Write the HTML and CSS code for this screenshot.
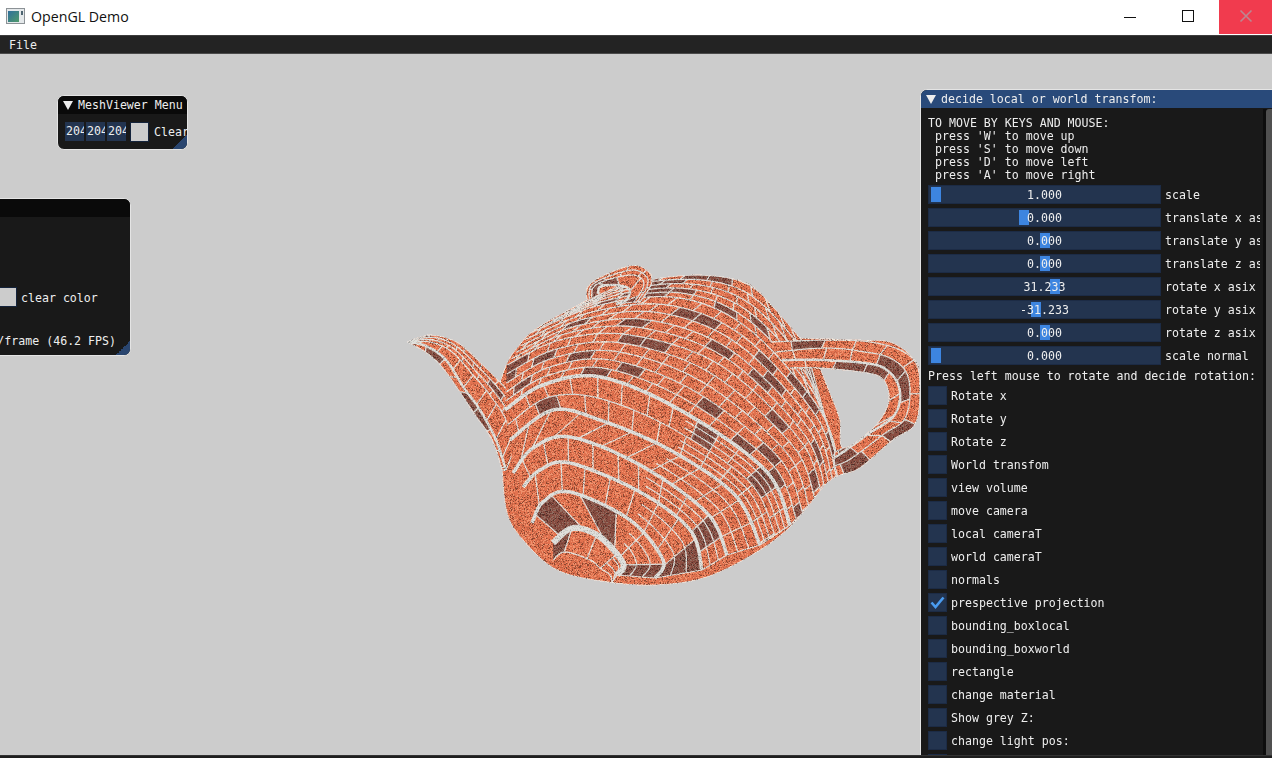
FILE: index.html
```html
<!DOCTYPE html>
<html lang="en">
<head>
    <meta charset="UTF-8">
    <title>OpenGL Demo</title>
    <link rel="stylesheet" href="styles.css">
</head>
<body>

    <!-- Title Bar -->
    <header class="titlebar">
        <svg class="app-icon" width="19" height="16" viewBox="0 0 19 16">
            <defs>
                <linearGradient id="icon-fill" x1="0" y1="0" x2="1" y2="1">
                    <stop offset="0" stop-color="#2f6f9c"/>
                    <stop offset="1" stop-color="#4f9a6a"/>
                </linearGradient>
            </defs>
            <rect x="0.5" y="0.5" width="18" height="15" fill="#e4e8ea" stroke="#8c9296"/>
            <rect x="2" y="3" width="11" height="11" fill="url(#icon-fill)"/>
            <rect x="15" y="3" width="2" height="4" fill="#4c6470"/>
        </svg>
        <span class="app-name">OpenGL Demo</span>
        <div class="win-buttons">
            <span class="win-btn"><i class="win-min"></i></span>
            <span class="win-btn"><i class="win-max"></i></span>
            <span class="win-btn win-close">
                <svg width="14" height="14" viewBox="0 0 14 14"><path d="M1.5 1.5L12.5 12.5M12.5 1.5L1.5 12.5" stroke="#bb8791" stroke-width="1.6"/></svg>
            </span>
        </div>
    </header>

    <!-- Menu Bar -->
    <nav class="menubar"><span>File</span></nav>

    <main class="desktop">
        <canvas id="teapot" width="530" height="330"></canvas>

        <!-- MeshViewer Menu -->
        <section class="window mesh-window">
            <div class="window-title"><i class="arrow"></i>MeshViewer Menu</div>
            <div class="mesh-row">
                <span class="num-input">204</span>
                <span class="num-input">204</span>
                <span class="num-input">204</span>
                <span class="swatch"></span>
                <span class="clear-label">Clear</span>
            </div>
            <i class="grip"></i>
        </section>

        <!-- Stats window, runs off the left edge -->
        <section class="window stats-window">
            <div class="window-title"></div>
            <div class="stats-color">
                <span class="swatch"></span>
                <span>clear color</span>
            </div>
            <div class="stats-fps">/frame (46.2 FPS)</div>
            <i class="grip"></i>
        </section>

        <!-- Transform window -->
        <section class="window transform-window">
            <div class="window-title title-active"><i class="arrow"></i>decide local or world transfom:</div>
            <div class="scrollbar"><i></i></div>
            <div class="transform-body">
                <pre class="help">TO MOVE BY KEYS AND MOUSE:
 press 'W' to move up
 press 'S' to move down
 press 'D' to move left
 press 'A' to move right</pre>

                <div class="slider-row"><div class="slider"><i style="left:2px"></i><span>1.000</span></div><label>scale</label></div>
                <div class="slider-row"><div class="slider"><i style="left:90px"></i><span>0.000</span></div><label>translate x asix</label></div>
                <div class="slider-row"><div class="slider"><i style="left:111px"></i><span>0.000</span></div><label>translate y asix</label></div>
                <div class="slider-row"><div class="slider"><i style="left:111px"></i><span>0.000</span></div><label>translate z asix</label></div>
                <div class="slider-row"><div class="slider"><i style="left:121px"></i><span>31.233</span></div><label>rotate x asix</label></div>
                <div class="slider-row"><div class="slider"><i style="left:102px"></i><span>-31.233</span></div><label>rotate y asix</label></div>
                <div class="slider-row"><div class="slider"><i style="left:111px"></i><span>0.000</span></div><label>rotate z asix</label></div>
                <div class="slider-row"><div class="slider"><i style="left:2px"></i><span>0.000</span></div><label>scale normal</label></div>

                <p class="note">Press left mouse to rotate and decide rotation:</p>

                <div class="check-row"><span class="check"></span>Rotate x</div>
                <div class="check-row"><span class="check"></span>Rotate y</div>
                <div class="check-row"><span class="check"></span>Rotate z</div>
                <div class="check-row"><span class="check"></span>World transfom</div>
                <div class="check-row"><span class="check"></span>view volume</div>
                <div class="check-row"><span class="check"></span>move camera</div>
                <div class="check-row"><span class="check"></span>local cameraT</div>
                <div class="check-row"><span class="check"></span>world cameraT</div>
                <div class="check-row"><span class="check"></span>normals</div>
                <div class="check-row">
                    <span class="check">
                        <svg width="19" height="19" viewBox="0 0 19 19"><path d="M3.5 9.5L7.5 14L15.5 4.5" fill="none" stroke="#4a9cf0" stroke-width="2.6"/></svg>
                    </span>prespective projection
                </div>
                <div class="check-row"><span class="check"></span>bounding_boxlocal</div>
                <div class="check-row"><span class="check"></span>bounding_boxworld</div>
                <div class="check-row"><span class="check"></span>rectangle</div>
                <div class="check-row"><span class="check"></span>change material</div>
                <div class="check-row"><span class="check"></span>Show grey Z:</div>
                <div class="check-row"><span class="check"></span>change light pos:</div>
                <div class="check-row"><span class="check"></span></div>
            </div>
        </section>
    </main>

    <footer class="bottom-edge"></footer>

    <script src="teapot.js"></script>
</body>
</html>
```

FILE: styles.css
```css
* {
    box-sizing: border-box;
}

html, body {
    height: 100%;
}

body {
    margin: 0;
    display: flex;
    flex-direction: column;
    overflow: hidden;
    background: #ccc;
    font-family: "DejaVu Sans Mono", monospace;
    font-size: 11.6px;
    color: #eee;
}

/* Title Bar */
.titlebar {
    height: 35px;
    flex: none;
    display: flex;
    align-items: flex-start;
    background: #fff;
    color: #111;
}

.app-icon {
    margin: 8px 6px 0 6px;
}

.app-name {
    margin-top: 7px;
    font-family: "Open Sans", sans-serif;
    font-size: 14.2px;
}

.win-buttons {
    margin-left: auto;
    display: flex;
}

.win-btn {
    width: 56px;
    height: 34px;
    display: flex;
    align-items: center;
    justify-content: center;
}

.win-min {
    width: 12px;
    height: 1px;
    margin-right: 4px;
    background: #111;
}

.win-max {
    width: 12px;
    height: 12px;
    margin-top: -2px;
    border: 1.5px solid #111;
}

.win-close {
    width: 53px;
    margin-left: 3px;
    background: #f13b4e;
}

.win-close svg {
    margin-top: -3px;
}

/* Menu Bar */
.menubar {
    height: 19px;
    flex: none;
    padding: 2px 9px 0;
    background: #232323;
    border-top: 1px solid #3d3d3d;
    border-bottom: 1px solid #4a4a4a;
    line-height: 15px;
}

/* Desktop */
.desktop {
    position: relative;
    flex: 1;
    overflow: hidden;
    background: #ccc;
}

#teapot {
    position: absolute;
    left: 400px;
    top: 206px;
}

.bottom-edge {
    height: 3px;
    flex: none;
    background: #1e1e1e;
    border-top: 1px solid #333;
}

/* Windows */
.window {
    position: absolute;
    overflow: hidden;
    background: #191919;
    border: 1px solid #e4e4e4;
    border-radius: 7px;
}

.window-title {
    height: 18px;
    padding-left: 5px;
    display: flex;
    align-items: center;
    background: #0a0a0a;
    white-space: nowrap;
}

.title-active {
    background: #294a7a;
}

.arrow {
    width: 0;
    height: 0;
    margin-right: 5px;
    border-left: 5px solid transparent;
    border-right: 5px solid transparent;
    border-top: 9px solid #eee;
}

.grip {
    position: absolute;
    right: 0;
    bottom: 0;
    width: 14px;
    height: 14px;
    background: linear-gradient(135deg, transparent 50%, #29456f 50%);
}

.swatch {
    width: 19px;
    height: 20px;
    flex: none;
    background: #ccc;
    border: 1px solid #14233b;
}

/* MeshViewer Menu */
.mesh-window {
    left: 57px;
    top: 41px;
    width: 131px;
    height: 55px;
}

.mesh-row {
    display: flex;
    gap: 2px;
    padding: 8px 0 0 7px;
    white-space: nowrap;
}

.num-input {
    width: 19px;
    height: 19px;
    flex: none;
    overflow: hidden;
    padding-left: 1px;
    line-height: 19px;
    background: #23344f;
}

.mesh-row .swatch {
    margin-left: 2px;
}

.clear-label {
    margin-left: 3px;
    line-height: 20px;
}

/* Stats window */
.stats-window {
    left: -100px;
    top: 144px;
    width: 231px;
    height: 158px;
}

.stats-color {
    display: flex;
    gap: 4px;
    margin: 70px 0 0 98px;
    line-height: 22px;
}

.stats-color .swatch {
    width: 18px;
}

.stats-fps {
    margin-top: 25px;
    padding-right: 14px;
    text-align: right;
    line-height: 14px;
}

/* Transform window */
.transform-window {
    left: 920px;
    top: 35px;
    width: 372px;
    height: 760px;
}

.transform-body {
    width: 340px;
    padding: 9px 0 0 7px;
}

.help {
    margin: 0 0 3px;
    font: inherit;
    line-height: 13px;
}

.slider-row {
    height: 19px;
    margin-bottom: 4px;
    display: flex;
    gap: 4px;
    line-height: 21px;
    white-space: nowrap;
}

.slider {
    position: relative;
    width: 233px;
    flex: none;
    line-height: 19px;
    background: #23344f;
    border: 1px solid #1c2b45;
    text-align: center;
}

.slider i {
    position: absolute;
    top: 1px;
    width: 10px;
    height: 15px;
    background: #3d85e0;
}

.slider span {
    position: relative;
}

.slider-row label {
    width: 95px;
    overflow: hidden;
}

.note {
    margin: -1px 0 0;
    height: 18px;
    padding-top: 2px;
    line-height: 13px;
    white-space: nowrap;
}

.check-row {
    height: 19px;
    margin-bottom: 4px;
    display: flex;
    gap: 4px;
    line-height: 21px;
    white-space: nowrap;
}

.check {
    width: 19px;
    height: 19px;
    flex: none;
    background: #23344f;
    border: 1px solid #1c2b45;
}

.check svg {
    display: block;
    margin: -1px;
}

.scrollbar {
    position: absolute;
    left: 342px;
    top: 19px;
    width: 10px;
    bottom: 0;
    background: #0d0d0d;
}

.scrollbar i {
    display: block;
    width: 10px;
    margin-left: 3px;
    height: 100%;
    border-radius: 3px;
    background: #505050;
}
```

FILE: teapot.js
```js
// Draws the brick textured teapot on the canvas
const canvas = document.getElementById("teapot");
const ctx = canvas.getContext("2d");
const ORIGIN_X = 400, ORIGIN_Y = 260;

// small seeded random so the picture is the same every run
let seed = 20240611;
function rand() {
    seed = (seed + 0x6D2B79F5) | 0;
    let t = Math.imul(seed ^ (seed >>> 15), 1 | seed);
    t = (t + Math.imul(t ^ (t >>> 7), 61 | t)) ^ t;
    return ((t ^ (t >>> 14)) >>> 0) / 4294967296;
}

const BRICK = "#e2724f", DARK = "#8a4e42", MORTAR = "#e0e0dc";
const THIN = 1.25;

// Catmull-Rom through the control points, n samples
function sample(pts, n) {
    const out = [];
    for (let i = 0; i < n; i++) {
        const u = i / (n - 1) * (pts.length - 1);
        const k = Math.min(Math.floor(u), pts.length - 2);
        const f = u - k;
        const p0 = pts[Math.max(k - 1, 0)], p1 = pts[k], p2 = pts[k + 1], p3 = pts[Math.min(k + 2, pts.length - 1)];
        const at = (a, b, c, d) => 0.5 * (2 * b + (c - a) * f + (2 * a - 5 * b + 4 * c - d) * f * f + (3 * b - a - 3 * c + d) * f * f * f);
        out.push([at(p0[0], p1[0], p2[0], p3[0]), at(p0[1], p1[1], p2[1], p3[1])]);
    }
    return out;
}

const outline = [
    ...sample([[407,342],[420,337],[433,335],[457,342],[480,362],[500,382]], 24),
    ...sample([[500,382],[507,363],[517,348],[537,328],[587,300]], 20),
    ...sample([[587,300],[587,288],[600,277],[633,265],[650,273],[651,281]], 20),
    ...sample([[651,281],[660,278],[703,275],[747,283],[773,307],[800,338]], 30),
    ...sample([[800,338],[860,340],[893,343],[917,363],[920,385],[920,407],[913,427],[893,440],[860,468],[840,475],[827,483],[813,500]], 60),
    ...sample([[813,500],[790,527],[757,552],[707,577],[657,585],[607,582],[557,570],[523,540],[507,513],[502,470]], 60),
    ...sample([[502,470],[492,440],[475,415],[455,385],[440,365],[425,352],[407,342]], 24)
];
const hole = sample([[820,368],[860,372],[880,377],[888,390],[887,407],[873,428],[843,448],[840,420],[830,393],[820,368]], 50);

function curveAt(keys, s) {
    const k = Math.min(Math.floor(s), keys.length - 2);
    const f = s - k;
    return keys[k].map((p, i) => [p[0] + (keys[k + 1][i][0] - p[0]) * f, p[1] + (keys[k + 1][i][1] - p[1]) * f]);
}

function tracePath(pts) {
    ctx.beginPath();
    pts.forEach((p, i) => i ? ctx.lineTo(p[0], p[1]) : ctx.moveTo(p[0], p[1]));
}

// keys: matching control curves, rows: row count per gap, thick: key curves drawn as wide bands
// fan: extra thin lines on the far part of each row
function drawPatch({ keys, rows, thick = [], bandWidth = 3, brick = 24, dark = 0.13, fan = 0 }) {
    const N = 90;
    const levels = [];
    rows.forEach((count, k) => {
        for (let j = 0; j < count; j++) levels.push({ s: k + j / count, key: j === 0 ? k : -1 });
    });
    levels.push({ s: keys.length - 1, key: keys.length - 1 });
    const lines = levels.map(l => sample(curveAt(keys, l.s), N));
    const cuts = [];

    for (let r = 0; r < lines.length - 1; r++) {
        const a = lines[r], b = lines[r + 1];
        let len = 0;
        let start = 0;
        let next = brick * (r % 2 ? 0.5 : 1) * (0.6 + rand() * 0.6);
        for (let i = 1; i < N; i++) {
            const mx = (a[i][0] + b[i][0] - a[i - 1][0] - b[i - 1][0]) / 2;
            const my = (a[i][1] + b[i][1] - a[i - 1][1] - b[i - 1][1]) / 2;
            len += Math.hypot(mx, my);
            if (len >= next || i === N - 1) {
                tracePath(a.slice(start, i + 1).concat(b.slice(start, i + 1).reverse()));
                ctx.closePath();
                ctx.fillStyle = rand() < dark ? DARK : BRICK;
                ctx.fill();
                cuts.push([a[i], b[i]]);
                start = i;
                next = len + brick * (0.85 + rand() * 0.3);
            }
        }
    }

    // mortar goes on after all the bricks
    ctx.strokeStyle = MORTAR;
    ctx.lineWidth = THIN;
    cuts.forEach(c => {
        ctx.beginPath();
        ctx.moveTo(c[0][0], c[0][1]);
        ctx.lineTo(c[1][0], c[1][1]);
        ctx.stroke();
    });
    if (fan) {
        for (let r = 0; r < lines.length - 1; r++) {
            for (let j = 1; j <= fan; j++) {
                const f = j / (fan + 1);
                const mid = lines[r].map((p, i) => [p[0] + (lines[r + 1][i][0] - p[0]) * f, p[1] + (lines[r + 1][i][1] - p[1]) * f]);
                tracePath(mid.slice(Math.floor(N * 0.62)));
                ctx.stroke();
            }
        }
    }
    levels.forEach((l, i) => {
        tracePath(lines[i]);
        ctx.lineWidth = thick.includes(l.key) ? bandWidth : THIN;
        ctx.stroke();
    });
}

function draw() {
    ctx.translate(-ORIGIN_X, -ORIGIN_Y);

    tracePath(outline);
    ctx.closePath();
    hole.forEach((p, i) => i ? ctx.lineTo(p[0], p[1]) : ctx.moveTo(p[0], p[1]));
    ctx.closePath();
    ctx.save();
    ctx.clip("evenodd");
    ctx.fillStyle = BRICK;
    ctx.fillRect(ORIGIN_X, ORIGIN_Y, canvas.width, canvas.height);

    // spout
    drawPatch({
        keys: [
            [[407,342],[433,335],[457,342],[480,362],[500,382],[514,400],[522,425]],
            [[407,342],[430,342],[452,352],[474,376],[490,395],[506,420],[514,450]],
            [[407,342],[426,346],[446,360],[464,388],[480,410],[496,440],[506,470]],
            [[407,342],[425,352],[440,365],[455,385],[475,415],[492,440],[502,470]]
        ],
        rows: [3, 1, 1], thick: [2], brick: 20, bandWidth: 2.5, dark: 0.16
    });

    // body upper part, thin rows and short bricks
    drawPatch({
        keys: [
            [[587,300],[640,280],[700,275],[745,283],[780,312],[805,345]],
            [[530,333],[600,305],[680,298],[750,330],[820,410],[840,470]],
            [[507,365],[560,340],[630,335],[720,365],[800,440],[822,495]],
            [[505,410],[543,385],[600,377],[680,410],[765,470],[790,525]]
        ],
        rows: [5, 5, 5], thick: [3], brick: 21, dark: 0.12, bandWidth: 3.5
    });

    // body lower part, rows run round the pole at the bottom
    drawPatch({
        keys: [
            [[505,410],[543,385],[600,377],[680,410],[765,470],[790,525]],
            [[510,440],[553,410],[600,420],[670,450],[735,495],[760,545]],
            [[513,473],[533,448],[570,437],[640,465],[707,513],[727,555]],
            [[523,487],[540,470],[570,463],[640,492],[690,530],[702,570]],
            [[532,523],[543,502],[570,492],[630,520],[663,560],[655,578]],
            [[553,543],[573,528],[600,537],[618,552],[623,563],[617,575]],
            [[553,560],[565,552],[590,560],[600,568],[610,575],[612,582]]
        ],
        rows: [2, 1, 1, 1, 1, 1], thick: [0, 1, 2, 3, 4],
        brick: 24, dark: 0.16, fan: 2, bandWidth: 3.5
    });

    // thick blob at the pole
    tracePath(sample([[553,543],[573,528],[600,537],[623,563],[617,575]], 40));
    ctx.strokeStyle = MORTAR;
    ctx.lineWidth = 6;
    ctx.stroke();

    // handle
    drawPatch({
        keys: [
            [[770,342],[830,340],[870,342],[900,350],[917,365],[920,395],[915,425],[893,440],[860,468],[838,478]],
            [[775,352],[826,348],[866,352],[890,358],[906,372],[910,395],[904,420],[884,434],[852,458],[835,466]],
            [[782,360],[823,360],[864,363],[884,368],[897,382],[900,400],[892,418],[868,434],[846,450],[834,458]],
            [[790,368],[820,368],[860,372],[880,377],[888,390],[887,407],[873,428],[855,440],[843,448],[835,452]]
        ],
        rows: [1, 1, 1], thick: [2], brick: 26, bandWidth: 2.5, dark: 0.2
    });

    // lid knob
    drawPatch({
        keys: [
            [[587,300],[587,288],[600,277],[633,265],[650,273],[651,285],[640,302]],
            [[592,298],[593,288],[604,281],[630,275],[642,279],[643,288],[634,302]],
            [[598,294],[600,287],[612,285],[626,287],[630,292],[626,300],[616,304]]
        ],
        rows: [2, 1], thick: [2], brick: 18, bandWidth: 2.5, dark: 0.15
    });
    ctx.restore();

    // light rim along the silhouette
    ctx.strokeStyle = "#e4e0dc";
    ctx.lineWidth = 1;
    tracePath(outline);
    ctx.closePath();
    ctx.stroke();
    tracePath(hole);
    ctx.closePath();
    ctx.stroke();

    speckle();
}

// Per pixel grain and hard edges, like the point sampled texture
function speckle() {
    const img = ctx.getImageData(0, 0, canvas.width, canvas.height);
    const d = img.data;
    for (let i = 0; i < d.length; i += 4) {
        if (d[i + 3] < 128) {
            d[i + 3] = 0;
            continue;
        }
        d[i + 3] = 255;
        const warm = d[i] - d[i + 2] > 30;
        const r = rand();
        let m = 1, lift = 0;
        if (warm) {
            if (r < 0.12) m = 0.62;
            else if (r < 0.3) m = 0.86;
            else if (r > 0.78) { m = 1.06; lift = 26; }
        } else {
            m = r < 0.08 ? 0.78 : r < 0.35 ? 0.92 : 1.0;
        }
        d[i] = Math.min(255, d[i] * m);
        d[i + 1] = Math.min(255, d[i + 1] * m + lift);
        d[i + 2] = Math.min(255, d[i + 2] * m + lift);
    }
    ctx.putImageData(img, 0, 0);
}

draw();
```
